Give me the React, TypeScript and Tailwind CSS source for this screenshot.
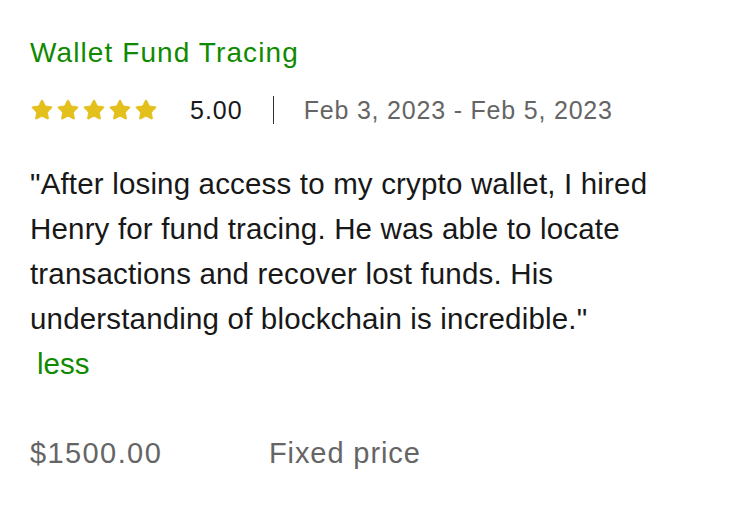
import { Star } from "lucide-react";

export default function App() {
  const stars = [0, 1, 2, 3, 4];

  return (
    <div className="w-[744px] h-[505px] bg-white font-['Liberation_Sans',Arial,sans-serif] text-[#181818]">
      <div className="pl-[30px] pt-[37px]">
        <h2 className="text-[28px] leading-[32px] tracking-[1.1px] text-[#108a00]">Wallet Fund Tracing</h2>

        {/* rating + dates */}
        <div className="flex items-center mt-[25px] h-[32px] leading-[32px]">
          <div className="flex gap-[2px]">
            {stars.map((i) => (
              <Star key={i} className="w-[24px] h-[24px] text-[#e3c01c] fill-[#e3c01c]" strokeWidth={1} />
            ))}
          </div>
          <span className="ml-[32px] text-[25px] tracking-[1px]">5.00</span>
          <span className="ml-[30px] w-px h-[28px] bg-[#333]" />
          <span className="ml-[30px] text-[25px] tracking-[0.8px] text-[#656565]">Feb 3, 2023 - Feb 5, 2023</span>
        </div>

        {/* review text */}
        <p className="mt-[35px] w-[670px] text-[29.5px] leading-[45px] tracking-[0.17px]">
          "After losing access to my crypto wallet, I hired Henry for fund tracing. He was able to locate
          transactions and recover lost funds. His understanding of blockchain is incredible."
        </p>
        <button className="block ml-[7px] text-[29.5px] leading-[45px] text-[#108a00]">less</button>

        {/* price */}
        <div className="flex items-center mt-[45px] text-[29px] leading-[45px] text-[#656565]">
          <span className="w-[239px] tracking-[1.4px]">$1500.00</span>
          <span className="tracking-[0.9px]">Fixed price</span>
        </div>
      </div>
    </div>
  );
}
